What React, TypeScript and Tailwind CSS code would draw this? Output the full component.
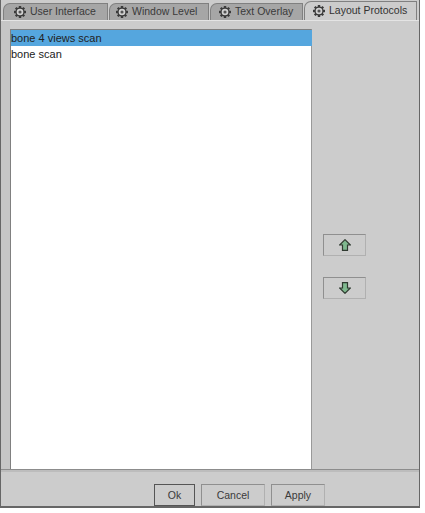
import React from "react"

const tabs = [
  { label: "User Interface", width: "w-[105px]", pad: "pl-[10px]" },
  { label: "Window Level", width: "w-[100px]", pad: "pl-[6px]" },
  { label: "Text Overlay", width: "w-[93px]", pad: "pl-[8px]" },
]

function Gear() {
  return (
    <svg width="12" height="12" viewBox="0 0 13 13" className="shrink-0">
      <g fill="#3a3a3a">
        <circle cx="6.5" cy="6.5" r="5" />
        <rect x="5.2" y="0" width="2.6" height="13" />
        <rect x="0" y="5.2" width="13" height="2.6" />
        <rect x="5.2" y="0" width="2.6" height="13" transform="rotate(45 6.5 6.5)" />
        <rect x="5.2" y="0" width="2.6" height="13" transform="rotate(-45 6.5 6.5)" />
      </g>
      <circle cx="6.5" cy="6.5" r="3.6" fill="#d0d0d0" />
      <circle cx="6.5" cy="6.5" r="1.7" fill="#555" />
    </svg>
  )
}

function Arrow({ down }: { down?: boolean }) {
  return (
    <svg width="12" height="12" viewBox="0 0 12 12" className={down ? "rotate-180" : ""}>
      <path d="M6 0.7 L11.3 6 L8.5 6 L8.5 11.3 L3.5 11.3 L3.5 6 L0.7 6 Z" fill="#7fb98f" stroke="#2f3a30" strokeWidth="1.2" />
    </svg>
  )
}

function Btn({ children, w, strong }: { children: React.ReactNode; w: string; strong?: boolean }) {
  return (
    <button
      className={`${w} h-[22px] flex items-center justify-center bg-[#cccccc] text-[10.5px] text-[#3a3a3a] border ${
        strong ? "border-[#555555]" : "border-[#8f8f8f] border-r-[#b0b0b0] border-b-[#b0b0b0]"
      }`}
    >
      {children}
    </button>
  )
}

export default function App() {
  return (
    <div className="w-[425px] h-[513px] bg-white font-['Liberation_Sans',Arial,sans-serif] overflow-hidden">
      <div className="w-[420px] h-[508px] bg-[#cccccc] border-l border-b-2 border-r border-[#666666] flex flex-col">
        {/* tab strip */}
        <div className="h-[20px] flex items-end pl-[2px] bg-[#cccccc]">
          {tabs.map((t) => (
            <div
              key={t.label}
              className={`${t.width} ${t.pad} h-[17px] mr-[1px] flex items-center gap-[4px] bg-[#a6a6a6] rounded-tl-[7px] border-t border-l border-r border-[#808080] text-[10.5px] text-[#3a3a3a]`}
            >
              <Gear />
              <span>{t.label}</span>
            </div>
          ))}
          <div className="w-[113px] h-[19px] pl-[8px] flex items-center gap-[4px] bg-[#cccccc] rounded-tl-[7px] border-t border-l border-r border-[#808080] text-[10.5px] text-[#333333]">
            <Gear />
            <span>Layout Protocols</span>
          </div>
        </div>

        {/* tab content */}
        <div className="flex-1 flex min-h-0 pt-[8px] border-t border-[#e4e4e4]">
          <div className="w-[9px] shrink-0 -mt-[8px] bg-[#c6c6c6]" />
          <div className="w-[302px] shrink-0 bg-white border-t border-l border-[#808080] border-r border-r-[#999999] flex flex-col text-[11px] text-[#222222]">
            <div className="h-[16px] mr-[-1px] bg-[#55a6de] flex items-center leading-none">bone 4 views scan</div>
            <div className="h-[17px] flex items-center leading-none">bone scan</div>
          </div>
          <div className="flex-1 flex flex-col items-start pl-[11px] pt-[205px] gap-[21px]">
            <Btn w="w-[43px]"><Arrow /></Btn>
            <Btn w="w-[43px]"><Arrow down /></Btn>
          </div>
        </div>

        {/* footer */}
        <div className="h-[37px] shrink-0 border-t border-[#8c8c8c] flex flex-col">
          <div className="h-[2px] bg-[#bcbcbc]" />
          <div className="flex-1 flex items-end gap-[6px] pl-[153px]">
            <Btn w="w-[41px]" strong><span className="pt-[2px]">Ok</span></Btn>
            <Btn w="w-[64px]"><span className="pt-[2px]">Cancel</span></Btn>
            <Btn w="w-[54px]"><span className="pt-[2px]">Apply</span></Btn>
          </div>
        </div>
      </div>
    </div>
  )
}
